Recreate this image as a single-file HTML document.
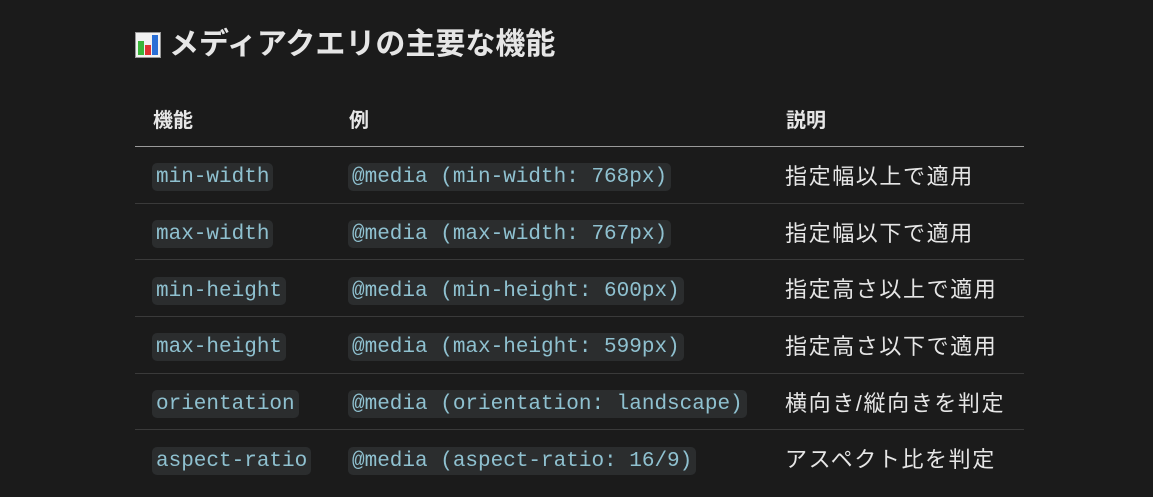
<!DOCTYPE html>
<html><head><meta charset="utf-8"><style>
body{margin:0;background:#1b1b1b;width:1153px;height:497px;overflow:hidden;font-family:"Liberation Sans","Noto Sans CJK JP",sans-serif;color:#e6e6e6}
h2{position:absolute;left:135px;top:23px;margin:0;font-size:30px;font-weight:bold;line-height:44px;display:flex;align-items:center}
.ic{display:inline-block;width:26px;height:26px;background:#f2f2f2;margin-right:8px;position:relative;border:1px solid #999;box-sizing:border-box}
.ic i{position:absolute;bottom:2px;width:6px}
table{position:absolute;left:135px;top:90px;width:889px;border-collapse:collapse;table-layout:fixed}
th{text-align:left;font-size:20px;font-weight:bold;height:56px;border-bottom:1px solid #9a9a9a;padding:0 0 0 18px}
td{height:55.7px;border-bottom:1px solid #3a3a3a;padding:0 0 0 17px;font-size:22px;letter-spacing:1.6px}
tr:last-child td{border-bottom:none}
code{font-family:"Liberation Mono",monospace;font-size:21px;letter-spacing:0;color:#8fc1d0;background:#2b2d2e;border-radius:5px;padding:3px 4px 2px;position:relative;top:1px}
</style></head><body>
<h2><span class="ic"><i style="left:2px;height:14px;background:#3ab53a"></i><i style="left:9px;height:10px;background:#d33"></i><i style="left:16px;height:20px;background:#2a6fd6"></i></span>メディアクエリの主要な機能</h2>
<table>
<tr><th style="width:178px">機能</th><th style="width:419px">例</th><th>説明</th></tr>
<tr><td><code>min-width</code></td><td><code>@media (min-width: 768px)</code></td><td>指定幅以上で適用</td></tr>
<tr><td><code>max-width</code></td><td><code>@media (max-width: 767px)</code></td><td>指定幅以下で適用</td></tr>
<tr><td><code>min-height</code></td><td><code>@media (min-height: 600px)</code></td><td>指定高さ以上で適用</td></tr>
<tr><td><code>max-height</code></td><td><code>@media (max-height: 599px)</code></td><td>指定高さ以下で適用</td></tr>
<tr><td><code>orientation</code></td><td><code>@media (orientation: landscape)</code></td><td>横向き/縦向きを判定</td></tr>
<tr><td><code>aspect-ratio</code></td><td><code>@media (aspect-ratio: 16/9)</code></td><td>アスペクト比を判定</td></tr>
</table>
</body></html>
